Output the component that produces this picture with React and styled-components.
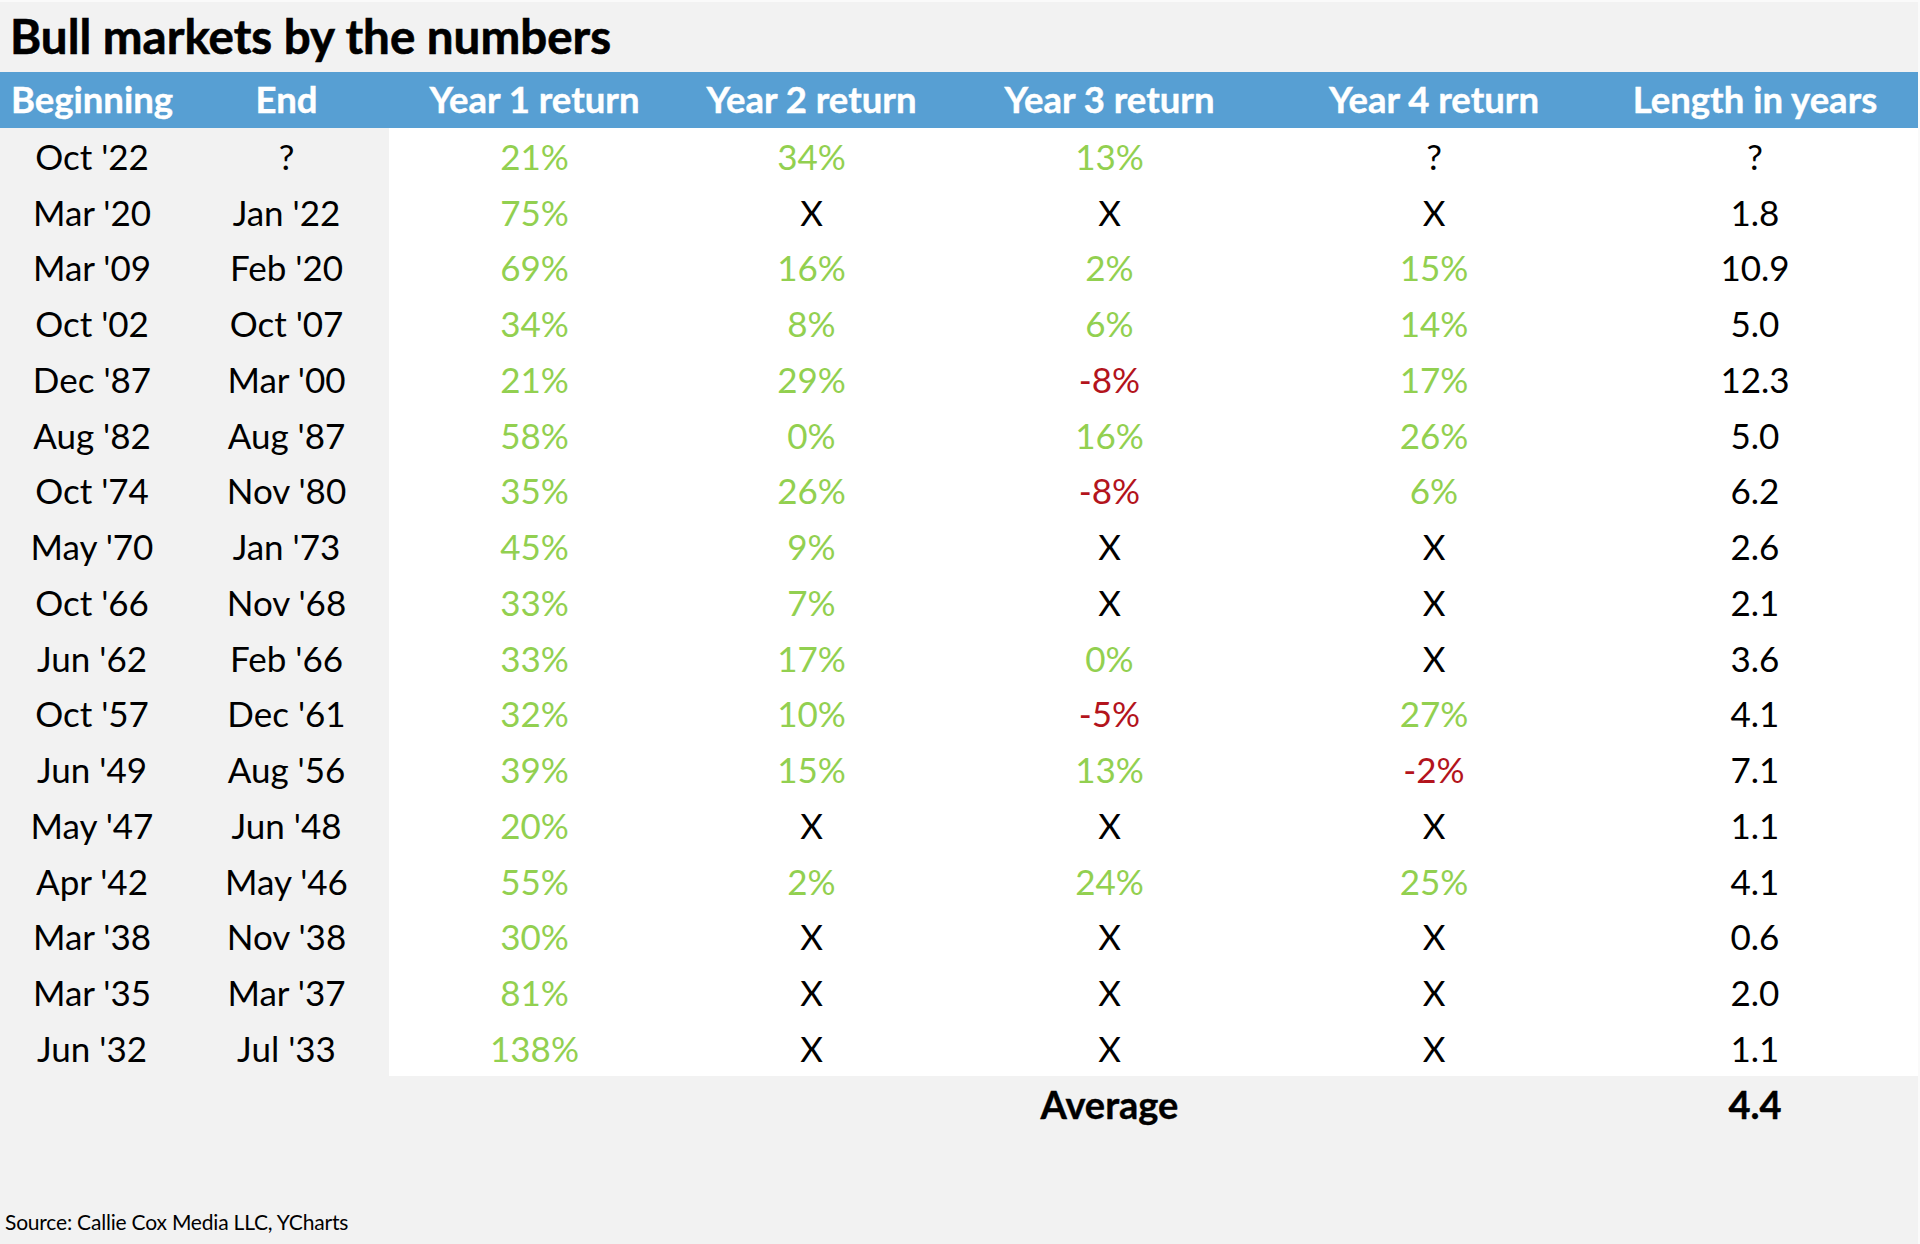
import React from 'react';
import styled, { createGlobalStyle } from 'styled-components';

const GlobalStyle = createGlobalStyle`
  html, body {
    margin: 0;
    padding: 0;
    background: #f2f2f2;
  }
  * { box-sizing: border-box; }
`;

const COLUMNS = ['Beginning', 'End', 'Year 1 return', 'Year 2 return', 'Year 3 return', 'Year 4 return', 'Length in years'];

const ROWS = [
  ["Oct '22", '?', '21%', '34%', '13%', '?', '?'],
  ["Mar '20", "Jan '22", '75%', 'X', 'X', 'X', '1.8'],
  ["Mar '09", "Feb '20", '69%', '16%', '2%', '15%', '10.9'],
  ["Oct '02", "Oct '07", '34%', '8%', '6%', '14%', '5.0'],
  ["Dec '87", "Mar '00", '21%', '29%', '-8%', '17%', '12.3'],
  ["Aug '82", "Aug '87", '58%', '0%', '16%', '26%', '5.0'],
  ["Oct '74", "Nov '80", '35%', '26%', '-8%', '6%', '6.2'],
  ["May '70", "Jan '73", '45%', '9%', 'X', 'X', '2.6'],
  ["Oct '66", "Nov '68", '33%', '7%', 'X', 'X', '2.1'],
  ["Jun '62", "Feb '66", '33%', '17%', '0%', 'X', '3.6'],
  ["Oct '57", "Dec '61", '32%', '10%', '-5%', '27%', '4.1'],
  ["Jun '49", "Aug '56", '39%', '15%', '13%', '-2%', '7.1'],
  ["May '47", "Jun '48", '20%', 'X', 'X', 'X', '1.1'],
  ["Apr '42", "May '46", '55%', '2%', '24%', '25%', '4.1'],
  ["Mar '38", "Nov '38", '30%', 'X', 'X', 'X', '0.6'],
  ["Mar '35", "Mar '37", '81%', 'X', 'X', 'X', '2.0'],
  ["Jun '32", "Jul '33", '138%', 'X', 'X', 'X', '1.1'],
];

const toneOf = (value) => {
  if (!value.endsWith('%')) return 'plain';
  return value.startsWith('-') ? 'down' : 'up';
};

const Page = styled.div`
  width: 1920px;
  height: 1244px;
  background: #f2f2f2;
  border-top: 2px solid #fafafa;
  border-right: 2px solid #fafafa;
  display: flex;
  flex-direction: column;
  font-family: Lato, 'Liberation Sans', sans-serif;
  color: #000;
`;

const Title = styled.h1`
  margin: 0;
  height: 70px;
  padding: 7px 0 0 10px;
  font-size: 47.5px;
  font-weight: 700;
  line-height: 54px;
  -webkit-text-stroke: 0.6px #000;
`;

const Grid = styled.div`
  display: grid;
  grid-template-columns: 184px 205px 291px 263px 333px 316px 1fr;
  grid-template-rows: 56px repeat(17, 55.75px) 57px;
`;

const HeaderCell = styled.div`
  background: #579fd3;
  color: #fff;
  font-size: 36.5px;
  font-weight: 700;
  -webkit-text-stroke: 0.4px #fff;
  display: flex;
  align-items: center;
  justify-content: center;
  padding-bottom: 2px;
`;

const Cell = styled.div`
  background: ${({ $shaded }) => ($shaded ? '#f2f2f2' : '#fff')};
  color: ${({ $tone }) => ($tone === 'up' ? '#92d050' : $tone === 'down' ? '#b3141c' : '#000')};
  font-size: 35px;
  font-weight: 400;
  display: flex;
  align-items: center;
  justify-content: center;
`;

const FooterCell = styled.div`
  background: #f2f2f2;
  font-size: 38px;
  font-weight: 700;
  -webkit-text-stroke: 0.4px #000;
  display: flex;
  align-items: center;
  justify-content: center;
`;

const Source = styled.p`
  margin: auto 0 0 0;
  padding: 0 0 10px 5px;
  font-size: 21px;
  letter-spacing: -0.2px;
`;

export default function App() {
  return (
    <>
      <GlobalStyle />
      <Page>
        <Title>Bull markets by the numbers</Title>
        <Grid>
          {COLUMNS.map((col) => (
            <HeaderCell key={col}>{col}</HeaderCell>
          ))}
          {ROWS.map((row, r) =>
            row.map((value, c) => (
              <Cell key={`${r}-${c}`} $shaded={c < 2} $tone={c < 2 ? 'plain' : toneOf(value)}>
                {value}
              </Cell>
            ))
          )}
          {COLUMNS.map((col, c) => (
            <FooterCell key={`f-${col}`}>
              {c === 4 ? 'Average' : c === 6 ? '4.4' : ''}
            </FooterCell>
          ))}
        </Grid>
        <Source>Source: Callie Cox Media LLC, YCharts</Source>
      </Page>
    </>
  );
}
